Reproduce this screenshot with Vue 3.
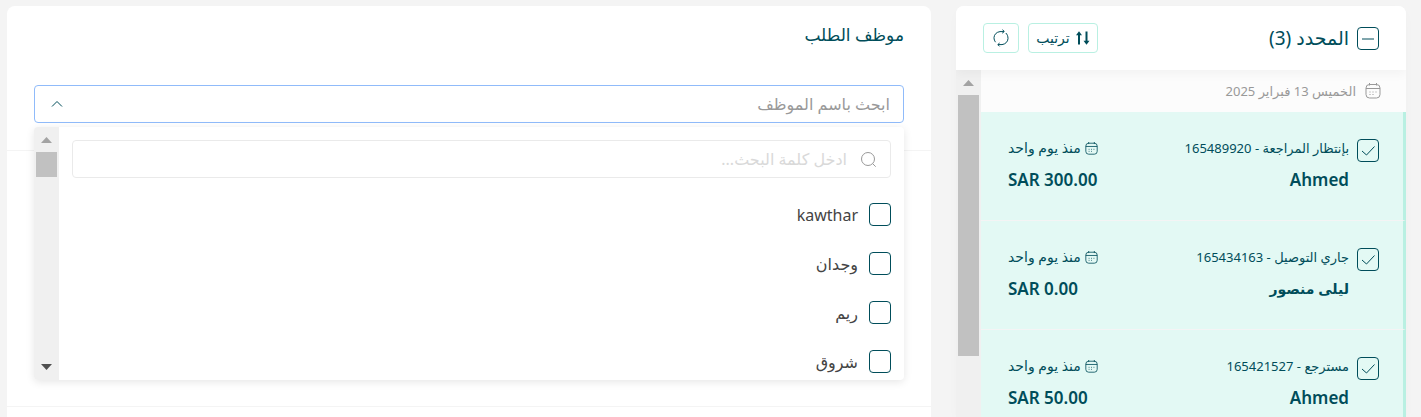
<script setup>
import { ref } from 'vue'

const orders = ref([
  { id: '165489920', status: 'بإنتظار المراجعة', customer: 'Ahmed', lang: 'en', total: 'SAR 300.00', checked: true },
  { id: '165434163', status: 'جاري التوصيل', customer: 'ليلى منصور', lang: 'ar', total: 'SAR 0.00', checked: true },
  { id: '165421527', status: 'مسترجع', customer: 'Ahmed', lang: 'en', total: 'SAR 50.00', checked: true }
])

const employees = ref([
  { name: 'kawthar', checked: false },
  { name: 'وجدان', checked: false },
  { name: 'ريم', checked: false },
  { name: 'شروق', checked: false }
])

const allSelected = ref(true)
const employeeQuery = ref('')
const keyword = ref('')
</script>

<template>
  <div class="page" dir="rtl" lang="ar">
    <aside class="panel orders">
      <header class="orders-head">
        <label class="select-all">
          <span class="tick">
            <input v-model="allSelected" type="checkbox" />
            <svg v-if="allSelected" viewBox="0 0 22 22" aria-hidden="true"><path d="M5 11.5h12" /></svg>
          </span>
          <span class="head-title">المحدد (3)</span>
        </label>
        <div class="tools">
          <button type="button" class="tool">
            <svg class="sort-icon" width="14" height="14" viewBox="0 0 14 14" aria-hidden="true">
              <path class="line" d="M3 13.500V3M10.500 0.500v10" />
              <path class="head" d="M0 4.200 3 0.300l3 3.900zM7.500 9.800l3 3.900 3-3.900z" />
            </svg>
            <span>ترتيب</span>
          </button>
          <button type="button" class="tool refresh" aria-label="تحديث">
            <svg width="18" height="18" viewBox="0 0 18 18" aria-hidden="true">
              <path d="M12 2.600H8C4.600 3 2.200 5.400 2 8.600c0 1.900.6 3.300 1.600 4.600M10.600.6l1.600 2-2 1.600" />
              <path d="M6 15.600h4c3.400-.4 5.800-2.800 6-6 0-2.500-.8-4.200-2.200-5.600M7.600 14l-1.800 1.600 1.800 1.800" />
            </svg>
          </button>
        </div>
      </header>

      <div class="orders-body">
        <div class="orders-list">
          <div class="date-row">
            <svg width="16" height="16" viewBox="0 0 16 16" aria-hidden="true">
              <rect x="1" y="1.500" width="14" height="13.500" rx="3.500" />
              <path d="M1 5.500h14M4.500 0v2.500M11.500 0v2.500" />
              <path class="dots" d="M4.500 9h1M7.500 9h1M10.500 9h1M4.500 11.500h1M7.500 11.500h1" />
            </svg>
            <span>الخميس 13 فبراير 2025</span>
          </div>
          <article v-for="order in orders" :key="order.id" class="order">
            <label class="tick">
              <input v-model="order.checked" type="checkbox" :aria-label="order.id" />
              <svg v-if="order.checked" viewBox="0 0 22 22" aria-hidden="true"><path d="M5 11.500l4.500 4L17.500 7" /></svg>
            </label>
            <div class="order-info">
              <span class="small">{{ order.status }} - {{ order.id }}</span>
              <strong :lang="order.lang" :class="{ arabic: order.lang === 'ar' }">{{ order.customer }}</strong>
            </div>
            <div class="order-meta">
              <span class="age">
                <svg width="13" height="13" viewBox="0 0 16 16" aria-hidden="true">
                  <rect x="1" y="1.500" width="14" height="13.500" rx="3.500" />
                  <path d="M1 5.500h14M4.500 0v2.500M11.500 0v2.500" />
                  <path class="dots" d="M4.500 9h1M7.500 9h1M10.500 9h1M4.500 11.500h1M7.500 11.500h1" />
                </svg>
                <span>منذ يوم واحد</span>
              </span>
              <strong dir="ltr">{{ order.total }}</strong>
            </div>
          </article>
        </div>
        <div class="scrollbar" aria-hidden="true">
          <i class="arrow up"></i>
          <i class="thumb long"></i>
        </div>
      </div>
    </aside>

    <main class="panel details">
      <section class="employee">
        <h2><label for="employee">موظف الطلب</label></h2>
        <div class="picker">
          <div class="combo">
            <input id="employee" v-model="employeeQuery" type="text" placeholder="ابحث باسم الموظف" />
            <button type="button" aria-label="إغلاق القائمة">
              <svg width="12" height="8" viewBox="0 0 12 8" aria-hidden="true"><path d="M1 6.500 6 1.500l5 5" /></svg>
            </button>
          </div>
          <div class="menu">
            <div class="menu-content">
              <label class="search">
                <svg width="17" height="17" viewBox="0 0 17 17" aria-hidden="true">
                  <circle cx="8" cy="8" r="6.500" />
                  <path d="m12.700 12.700 3 3" />
                </svg>
                <input v-model="keyword" type="text" placeholder="ادخل كلمة البحث..." />
              </label>
              <ul>
                <li v-for="employee in employees" :key="employee.name">
                  <label>
                    <span class="tick">
                      <input v-model="employee.checked" type="checkbox" />
                      <svg v-if="employee.checked" viewBox="0 0 22 22" aria-hidden="true"><path d="M5 11.500l4.500 4L17.500 7" /></svg>
                    </span>
                    <span>{{ employee.name }}</span>
                  </label>
                </li>
              </ul>
            </div>
            <div class="scrollbar" aria-hidden="true">
              <i class="arrow up"></i>
              <i class="thumb short"></i>
              <i class="arrow down"></i>
            </div>
          </div>
        </div>
      </section>
      <section class="next"></section>
    </main>
  </div>
</template>

<style>
body {
  margin: 0;
  background: #f4f4f4;
}
</style>

<style scoped>
* {
  box-sizing: border-box;
}

.page {
  --teal: #004d5a;
  display: grid;
  grid-template-columns: 450fr 924fr;
  gap: 25px;
  height: 100vh;
  padding: 6px 15px 0 7px;
  overflow: hidden;
  color: var(--teal);
  font-family: "Noto Sans", "DejaVu Sans", sans-serif;
  font-size: 16px;
  line-height: 24px;
}

svg {
  display: block;
  flex: none;
  fill: none;
  stroke: currentColor;
}

input,
button {
  font: inherit;
  color: inherit;
}

.panel {
  min-width: 0;
  background: #fff;
  border-radius: 8px 8px 0 0;
}

.tick {
  display: grid;
  flex: none;
  width: 22px;
  height: 23px;
}

.tick > * {
  grid-area: 1 / 1;
  width: 22px;
  height: 23px;
}

.tick input {
  margin: 0;
  appearance: none;
  border: 1px solid var(--teal);
  border-radius: 4px;
}

.tick svg {
  pointer-events: none;
}

/* Orders panel */
.orders {
  overflow: hidden;
  box-shadow: 0 4px 12px rgba(0, 0, 0, 0.02);
}

.orders-head {
  position: relative;
  display: flex;
  align-items: center;
  justify-content: space-between;
  height: 64px;
  padding: 0 27px;
  background: #fff;
  box-shadow: 0 4px 10px rgba(0, 0, 0, 0.04);
}

.select-all {
  display: flex;
  align-items: center;
  gap: 8px;
}

.head-title {
  font-size: 19px;
}

.tools {
  display: flex;
  gap: 9px;
}

.tool {
  display: flex;
  align-items: center;
  justify-content: center;
  gap: 6px;
  width: 70px;
  height: 30px;
  padding: 0;
  font-size: 14px;
  line-height: 20px;
  background: #fff;
  border: 1px solid #b9f0e2;
  border-radius: 4px;
}

.refresh {
  width: 36px;
}

.sort-icon .line {
  stroke-width: 2;
}

.sort-icon .head {
  fill: currentColor;
  stroke: none;
}

.orders-body {
  display: flex;
}

.orders-list {
  flex: 1;
  min-width: 0;
}

.date-row {
  display: flex;
  align-items: center;
  gap: 9px;
  height: 42px;
  padding: 0 25px;
  color: #999;
  font-size: 13px;
  background: #fcfcfc;
}

.order {
  display: flex;
  height: 109px;
  padding: 24px 24px 0 27px;
  background: #e3f9f4;
  border-right: 3px solid #b9f0e2;
  border-bottom: 1px solid #f4f4f4;
}

.order .tick {
  margin-top: 3px;
}

.order-info,
.order-meta {
  display: flex;
  flex-direction: column;
  gap: 8px;
}

.order-info {
  flex: 1;
  margin-right: 8px;
}

.order-meta {
  align-items: flex-end;
}

.small {
  font-size: 13px;
}

strong {
  font-size: 17px;
  font-weight: 600;
}

.arabic {
  font-size: 14px;
}

.age {
  display: flex;
  align-items: center;
  gap: 4px;
  font-size: 14px;
}

/* Scroll tracks */
.scrollbar {
  display: flex;
  flex: none;
  flex-direction: column;
  align-items: center;
  width: 25px;
  background: #f0f0f0;
}

.arrow {
  width: 11px;
  height: 6px;
  background: #a3a3a3;
  clip-path: polygon(50% 0, 100% 100%, 0 100%);
}

.up {
  margin: 10px 0 9px;
}

.down {
  margin-top: auto;
  margin-bottom: 10px;
  background: #505050;
  clip-path: polygon(0 0, 100% 0, 50% 100%);
}

.thumb {
  width: 21px;
  background: #c1c1c1;
}

.long {
  height: 261px;
}

.short {
  height: 25px;
}

/* Employee picker */
.employee {
  height: 145px;
  padding: 17px 27px 0;
  border-bottom: 1px solid #f4f4f4;
}

.next {
  height: 256px;
  border-bottom: 1px solid #f4f4f4;
}

h2 {
  margin: 0 0 38px;
  font-size: 17px;
  font-weight: 500;
  line-height: 24px;
}

.picker {
  position: relative;
}

.combo {
  display: flex;
  align-items: center;
  height: 38px;
  padding: 0 13px 0 16px;
  border: 1px solid #90bbfa;
  border-radius: 4px;
}

.combo input,
.search input {
  flex: 1;
  min-width: 0;
  padding: 0;
  background: none;
  border: 0;
  outline: 0;
}

.combo input::placeholder {
  color: #999;
  opacity: 1;
}

.combo button {
  padding: 0;
  background: none;
  border: 0;
}

.menu {
  position: absolute;
  top: calc(100% + 4px);
  right: 0;
  left: 0;
  display: flex;
  height: 253px;
  overflow: hidden;
  background: #fff;
  border-radius: 4px;
  box-shadow: 0 2px 8px rgba(0, 0, 0, 0.1);
}

.menu-content {
  flex: 1;
  min-width: 0;
  padding: 13px;
}

.search {
  display: flex;
  align-items: center;
  gap: 13px;
  height: 38px;
  padding: 0 13px;
  color: #999;
  border: 1px solid #eaeaea;
  border-radius: 4px;
}

.search input::placeholder {
  color: #d9d9d9;
  opacity: 1;
}

ul {
  margin: 12px 0 0;
  padding: 0;
  list-style: none;
}

li label {
  display: flex;
  align-items: center;
  gap: 11px;
  height: 49px;
  color: #444;
}
</style>
